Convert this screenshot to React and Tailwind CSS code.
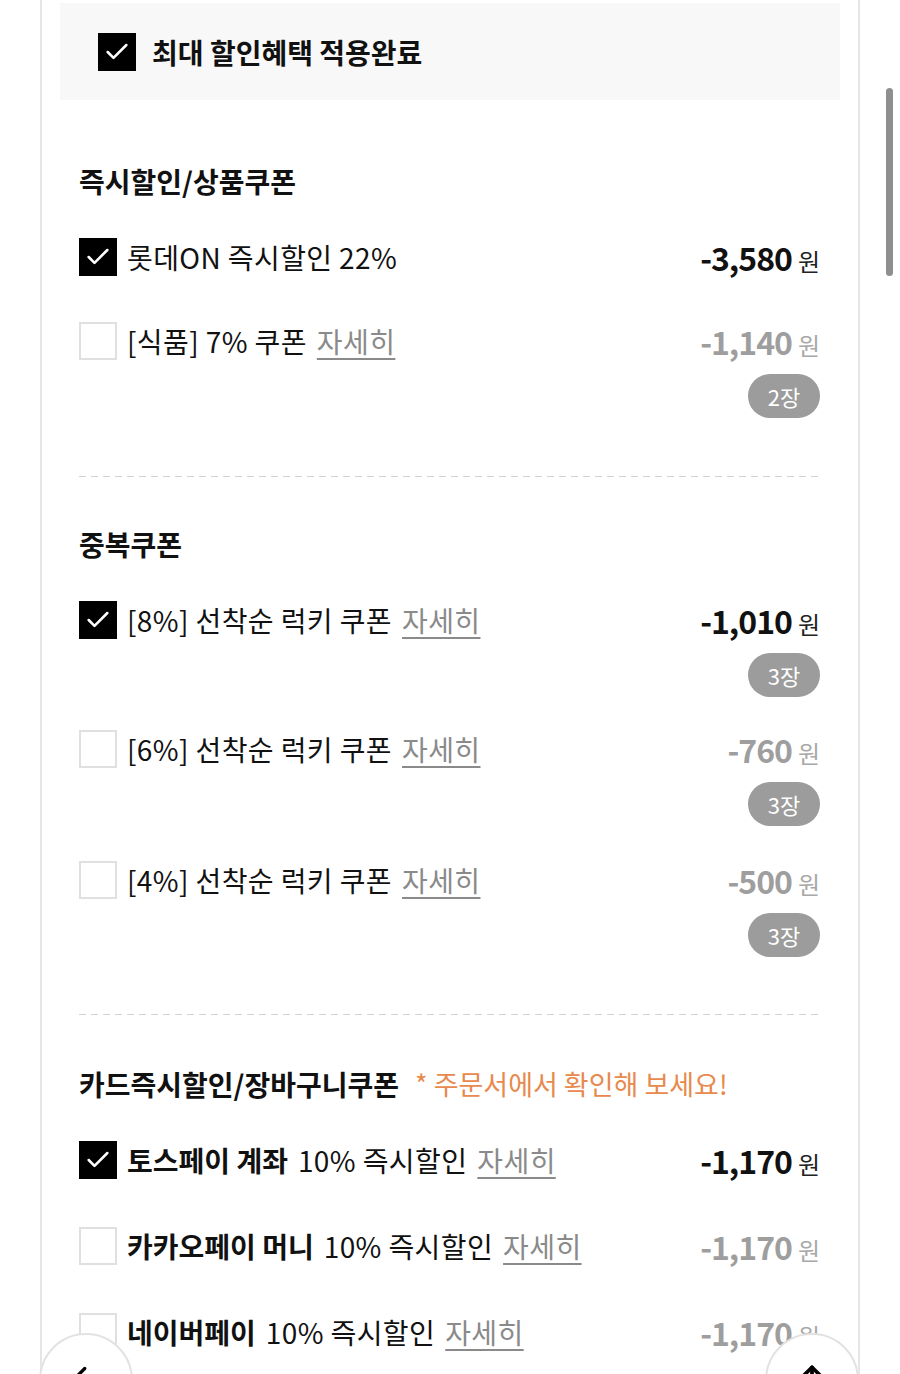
import { Check, ChevronLeft, ArrowUp } from "lucide-react";

const font = { fontFamily: '"Noto Sans CJK KR", "Noto Sans", sans-serif' };

function Box({ checked, size = "w-[38px] h-[38px]" }) {
  if (checked) {
    return (
      <span className={`${size} shrink-0 bg-black flex items-center justify-center`}>
        <Check className="w-[28px] h-[28px] text-white" strokeWidth={2.2} />
      </span>
    );
  }
  return <span className={`${size} shrink-0 bg-white border-2 border-[#e0e0e0]`} />;
}

function Price({ value, on }) {
  return (
    <div className="flex items-baseline gap-[6px] shrink-0">
      <span
        className={`text-[32px] font-bold tracking-[-1px] leading-none ${on ? "text-[#111]" : "text-[#9e9e9e]"}`}
      >
        {value}
      </span>
      <span className={`text-[24px] leading-none ${on ? "text-[#222]" : "text-[#a8a8a8]"}`}>원</span>
    </div>
  );
}

function Detail() {
  return (
    <span className="text-[#8a8a8a] underline underline-offset-[5px] decoration-[1.5px] ml-[10px]">
      자세히
    </span>
  );
}

function Item({ checked, brand, label, detail, price, count, className = "" }) {
  return (
    <div className={className}>
      <div className="flex items-center h-[40px]">
        <Box checked={checked} />
        <div className="ml-[10px] flex-1 text-[28px] text-[#111] tracking-[0.4px] whitespace-nowrap leading-none">
          {brand ? <span className="font-bold mr-[10px] tracking-[0px]">{brand}</span> : null}
          {label}
          {detail ? <Detail /> : null}
        </div>
        <Price value={price} on={checked} />
      </div>
      {count ? (
        <div className="flex justify-end mt-[13px]">
          <span className="h-[44px] w-[72px] rounded-full bg-[#9c9c9c] text-white text-[22px] flex items-center justify-center">
            {count}
          </span>
        </div>
      ) : null}
    </div>
  );
}

function Dashed({ className = "" }) {
  return (
    <div
      className={`h-px bg-[repeating-linear-gradient(90deg,#d2d2d2_0_7px,transparent_7px_12px)] ${className}`}
    />
  );
}

function Title({ children, className = "" }) {
  return (
    <div className={`h-[40px] flex items-center text-[28px] font-bold text-[#111] ${className}`}>
      {children}
    </div>
  );
}

export default function App() {
  return (
    <div className="relative h-[1374px] w-[900px] overflow-hidden bg-white" style={font}>
      <div className="mx-[40px] h-full border-x-2 border-[#e6e6e6] pt-[3px]">
        <div className="mx-[18px] h-[97px] bg-[#f8f8f8] flex items-center pl-[38px]">
          <Box checked />
          <span className="ml-[16px] text-[28px] font-bold text-[#111]">최대 할인혜택 적용완료</span>
        </div>

        <div className="pl-[37px] pr-[38px]">
          <Title className="mt-[61px]">즉시할인/상품쿠폰</Title>
          <Item className="mt-[36px]" checked label="롯데ON 즉시할인 22%" price="-3,580" />
          <Item className="mt-[44px]" label="[식품] 7% 쿠폰" detail price="-1,140" count="2장" />

          <Dashed className="mt-[58px]" />

          <Title className="mt-[47px]">중복쿠폰</Title>
          <Item className="mt-[36px]" checked label="[8%] 선착순 럭키 쿠폰" detail price="-1,010" count="3장" />
          <Item className="mt-[32px]" label="[6%] 선착순 럭키 쿠폰" detail price="-760" count="3장" />
          <Item className="mt-[34px]" label="[4%] 선착순 럭키 쿠폰" detail price="-500" count="3장" />

          <Dashed className="mt-[57px]" />

          <Title className="mt-[49px]">
            카드즉시할인/장바구니쿠폰
            <span className="ml-[16px] text-[27px] font-normal text-[#e8894d]">
              * 주문서에서 확인해 보세요!
            </span>
          </Title>
          <Item className="mt-[36px]" checked brand="토스페이 계좌" label="10% 즉시할인" detail price="-1,170" />
          <Item className="mt-[46px]" brand="카카오페이 머니" label="10% 즉시할인" detail price="-1,170" />
          <Item className="mt-[46px]" brand="네이버페이" label="10% 즉시할인" detail price="-1,170" />
        </div>
      </div>

      {/* scroll indicator */}
      <div className="absolute left-[886px] top-[88px] w-[7px] h-[188px] rounded-full bg-[#8f8f8f]" />

      {/* floating buttons */}
      <button className="absolute left-[39px] top-[1333px] w-[94px] h-[94px] rounded-full bg-white border-2 border-[#e2e2e2] flex justify-center pt-[26px]">
        <ChevronLeft className="w-[30px] h-[30px] text-black -ml-[10px]" strokeWidth={2.6} />
      </button>
      <button className="absolute left-[765px] top-[1333px] w-[94px] h-[94px] rounded-full bg-white border-2 border-[#e2e2e2] flex justify-center pt-[26px]">
        <ArrowUp className="w-[30px] h-[30px] text-black" strokeWidth={3} />
      </button>
    </div>
  );
}
